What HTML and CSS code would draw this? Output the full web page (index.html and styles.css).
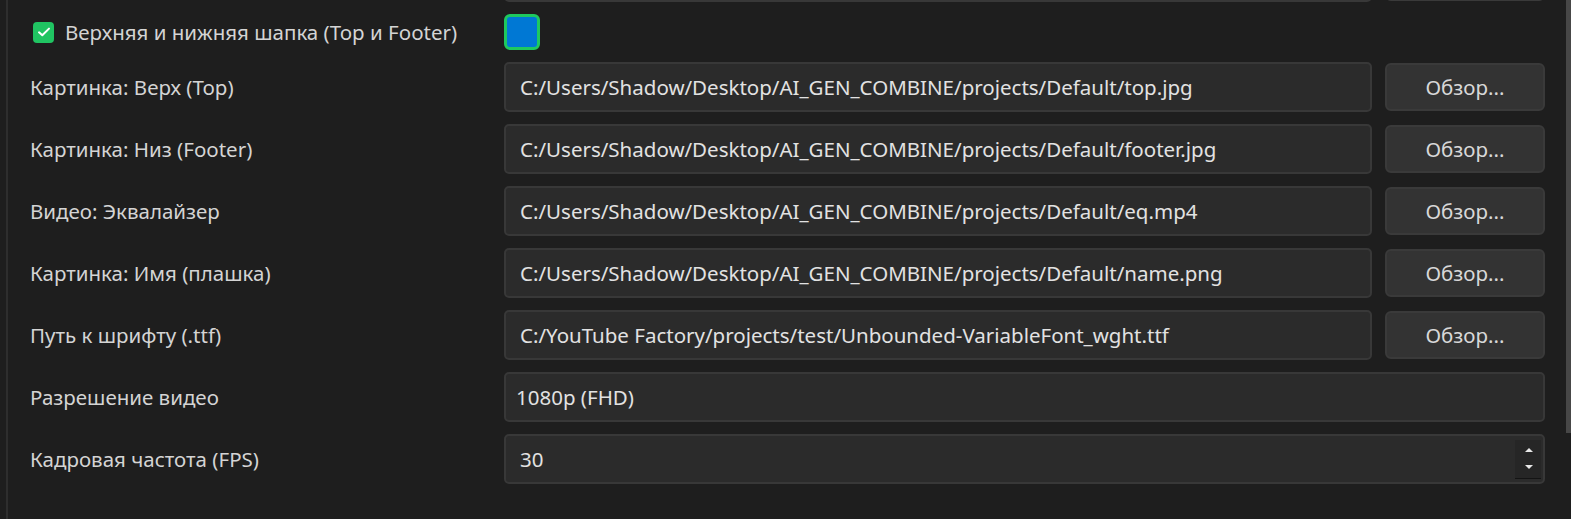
FILE: index.html
```html
<!DOCTYPE html>
<html lang="ru">

<head>
	<meta charset="UTF-8">
	<meta name="viewport" content="width=device-width, initial-scale=1.0">
	<title>Настройки проекта</title>
	<link rel="stylesheet" href="styles.css">
</head>

<body>
	<div class="panel">
		<div class="form">
			<!-- previous row, scrolled out of view -->
			<div class="row">
				<span class="label"></span>
				<div class="field"></div>
				<button class="browse"></button>
			</div>

			<div class="row short">
				<label class="check">
					<span class="box">
						<svg width="16" height="16" viewBox="0 0 16 16"><path d="M3 8.3 L6.3 11.3 L13 4.6" fill="none" stroke="#fff" stroke-width="2" stroke-linecap="round" stroke-linejoin="round"/></svg>
					</span>
					Верхняя и нижняя шапка (Top и Footer)
				</label>
				<div class="swatch-cell"><span class="swatch"></span></div>
			</div>

			<div class="row">
				<span class="label">Картинка: Верх (Top)</span>
				<div class="field">C:/Users/Shadow/Desktop/AI_GEN_COMBINE/projects/Default/top.jpg</div>
				<button class="browse">Обзор...</button>
			</div>

			<div class="row">
				<span class="label">Картинка: Низ (Footer)</span>
				<div class="field">C:/Users/Shadow/Desktop/AI_GEN_COMBINE/projects/Default/footer.jpg</div>
				<button class="browse">Обзор...</button>
			</div>

			<div class="row">
				<span class="label">Видео: Эквалайзер</span>
				<div class="field">C:/Users/Shadow/Desktop/AI_GEN_COMBINE/projects/Default/eq.mp4</div>
				<button class="browse">Обзор...</button>
			</div>

			<div class="row">
				<span class="label">Картинка: Имя (плашка)</span>
				<div class="field">C:/Users/Shadow/Desktop/AI_GEN_COMBINE/projects/Default/name.png</div>
				<button class="browse">Обзор...</button>
			</div>

			<div class="row">
				<span class="label">Путь к шрифту (.ttf)</span>
				<div class="field">C:/YouTube Factory/projects/test/Unbounded-VariableFont_wght.ttf</div>
				<button class="browse">Обзор...</button>
			</div>

			<div class="row">
				<span class="label">Разрешение видео</span>
				<div class="field wide combo">1080p (FHD)</div>
			</div>

			<div class="row">
				<span class="label">Кадровая частота (FPS)</span>
				<div class="field wide spin">
					<span>30</span>
					<span class="arrows">
						<span class="arrow up"></span>
						<span class="arrow down"></span>
					</span>
				</div>
			</div>
		</div>
		<div class="scrollbar"></div>
	</div>
</body>

</html>
```

FILE: styles.css
```css
body {
	margin: 0;
	background-color: #1e1e1e;
	color: #d4d4d4;
	font-family: "Noto Sans", "Open Sans", sans-serif;
	font-size: 20.5px;
	overflow: hidden;
}

.panel {
	display: flex;
	height: 519px;
	margin-left: 6px;
	border-left: 2px solid #2e2e2e;
}

.form {
	flex: 1;
	margin-top: -48px;
	padding-left: 22px;
	padding-right: 21px;
	display: flex;
	flex-direction: column;
	gap: 12px;
}

.row {
	display: grid;
	grid-template-columns: 461px 1fr 160px;
	column-gap: 13px;
	height: 50px;
	align-items: center;
}

.row.short {
	height: 36px;
}

.field {
	height: 50px;
	box-sizing: border-box;
	display: flex;
	align-items: center;
	padding-left: 14px;
	background-color: #2b2b2b;
	border: 2px solid #383838;
	border-radius: 5px;
	color: #e2e2e2;
	white-space: nowrap;
	overflow: hidden;
}

.field.wide {
	grid-column: 2 / 4;
}

.field.combo {
	padding-left: 10px;
}

.spin {
	justify-content: space-between;
	padding-right: 2px;
}

.arrows {
	display: flex;
	flex-direction: column;
	width: 26px;
}

.arrow {
	height: 19px;
	background-color: #262626;
	box-shadow: 0 1px 0 #141414;
	position: relative;
}

.arrow::after {
	content: "";
	position: absolute;
	left: 10px;
	top: 8px;
	border-left: 4px solid transparent;
	border-right: 4px solid transparent;
}

.arrow.up::after {
	border-bottom: 4px solid #e8e8e8;
}

.arrow.down::after {
	top: 6px;
	border-top: 4px solid #e8e8e8;
}

.browse {
	height: 48px;
	box-sizing: border-box;
	background-color: #333333;
	border: 2px solid #3a3a3a;
	border-radius: 6px;
	color: #d8d8d8;
	font-family: inherit;
	font-size: 20.5px;
}

.check {
	display: flex;
	align-items: center;
	gap: 11px;
	margin-left: 3px;
	grid-column: 1;
	white-space: nowrap;
}

.box {
	width: 21px;
	height: 21px;
	border-radius: 4px;
	background-color: #20c462;
	display: flex;
	align-items: center;
	justify-content: center;
}

.swatch-cell {
	display: flex;
	align-items: center;
}

.swatch {
	width: 36px;
	height: 36px;
	box-sizing: border-box;
	border: 3px solid #1ec95f;
	border-radius: 6px;
	background-color: #0078d4;
}

.scrollbar {
	width: 5px;
	height: 433px;
	background-color: #474747;
}
```
